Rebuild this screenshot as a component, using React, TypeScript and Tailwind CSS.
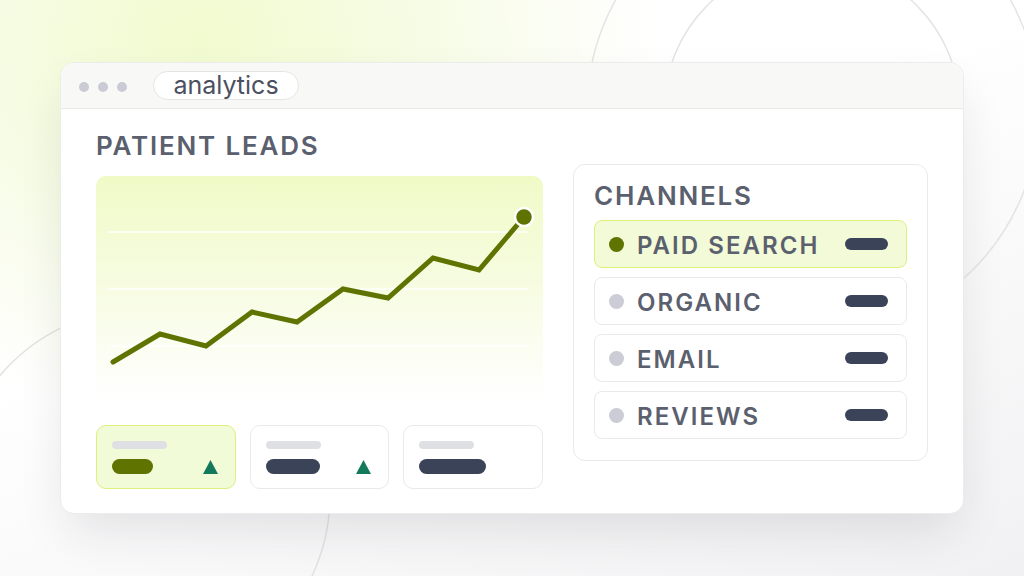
import React from "react";

const points: [number, number][] = [
  [17, 186],
  [64, 158],
  [110, 170],
  [156, 136],
  [201, 146],
  [247, 113],
  [292, 122],
  [337, 82],
  [383, 94],
  [428, 41],
];

const stats = [
  { active: true, bar: 41, up: true },
  { active: false, bar: 54, up: true },
  { active: false, bar: 67, up: false },
];

const channels = [
  { name: "PAID SEARCH", active: true },
  { name: "ORGANIC", active: false },
  { name: "EMAIL", active: false },
  { name: "REVIEWS", active: false },
];

function Backdrop() {
  return (
    <svg className="absolute inset-0" width="1024" height="576" viewBox="0 0 1024 576" fill="none">
      <circle cx="812" cy="110" r="148" stroke="#e4e4e2" strokeWidth="1.5" />
      <circle cx="813" cy="110" r="226" stroke="#e4e4e2" strokeWidth="1.5" />
      <circle cx="143" cy="496" r="187" stroke="#e2e2e0" strokeWidth="1.5" />
    </svg>
  );
}

function LeadsChart() {
  const d = points.map(([x, y], i) => `${i ? "L" : "M"}${x} ${y}`).join(" ");
  const [ex, ey] = points[points.length - 1];
  return (
    <div className="h-[224px] w-full rounded-[10px] bg-gradient-to-b from-[#f0fac6] via-[#f7fce2] to-white">
      <svg width="447" height="224" viewBox="0 0 447 224" fill="none">
        {[56, 113, 170].map((y) => (
          <line key={y} x1="12" x2="432" y1={y} y2={y} stroke="#ffffff" strokeWidth="1.5" strokeOpacity="0.9" />
        ))}
        <path d={d} stroke="#5e7300" strokeWidth="5" strokeLinejoin="miter" strokeLinecap="round" />
        <circle cx={ex} cy={ey} r="9" fill="#5e7300" stroke="#ffffff" strokeWidth="2.5" />
      </svg>
    </div>
  );
}

function StatCard({ active, bar, up }: { active: boolean; bar: number; up: boolean }) {
  return (
    <div
      className={`flex h-[64px] flex-col gap-[10px] rounded-[10px] border px-[15px] pt-[15px] ${
        active ? "border-[#dcf07c] bg-[#f2fbd8]" : "border-[#e9e9e7] bg-white"
      }`}
    >
      <div className="h-[8px] w-[55px] rounded-full bg-[#dfe0e4]" />
      <div className="flex items-center justify-between pr-[2px]">
        <div
          className={`h-[15px] rounded-full ${active ? "bg-[#5e7300]" : "bg-[#3b4358]"}`}
          style={{ width: bar }}
        />
        {up && (
          <svg width="15" height="14" viewBox="0 0 15 14">
            <path d="M7.5 0L15 14H0Z" fill="#14795a" />
          </svg>
        )}
      </div>
    </div>
  );
}

function ChannelRow({ name, active }: { name: string; active: boolean }) {
  return (
    <div
      className={`flex h-[48px] items-center rounded-[8px] border pl-[14px] pr-[18px] ${
        active ? "border-[#dcf07c] bg-[#f2fad8]" : "border-[#e9e9e7] bg-white"
      }`}
    >
      <div className={`size-[15px] rounded-full ${active ? "bg-[#5e7300]" : "bg-[#cbccd5]"}`} />
      <span className="ml-[13px] pt-[3px] text-[24px] leading-none font-semibold tracking-[0.085em] text-[#5b606e]">
        {name}
      </span>
      <div className="ml-auto h-[12px] w-[43px] rounded-full bg-[#3b4358]" />
    </div>
  );
}

export default function App() {
  return (
    <div
      className="relative h-[576px] w-[1024px] overflow-hidden bg-[radial-gradient(ellipse_460px_380px_at_200px_40px,#f1fbcf_0%,#f7fce6_50%,rgba(255,255,255,0)_100%),linear-gradient(160deg,#ffffff_40%,#f1f1f3_100%)]"
      style={{ fontFamily: "Inter, 'Noto Sans', sans-serif" }}
    >
      <Backdrop />
      <div className="relative pl-[60px] pt-[62px]">
        <div className="h-[452px] w-[904px] overflow-hidden rounded-[14px] border border-[#ececea] bg-white shadow-[0_22px_50px_-8px_rgba(30,30,45,0.12)]">
          <div className="flex h-[46px] items-center border-b border-[#e9e9e7] bg-[#f8f8f6] pl-[18px]">
            <div className="flex gap-[9px] pt-[2px]">
              <span className="size-[10px] rounded-full bg-[#cacbd4]" />
              <span className="size-[10px] rounded-full bg-[#cacbd4]" />
              <span className="size-[10px] rounded-full bg-[#cacbd4]" />
            </div>
            <div className="ml-[26px] flex h-[29px] w-[146px] items-center justify-center rounded-full border border-[#e4e4e2] bg-white text-[25px] leading-none text-[#4b5060]">
              <span>analytics</span>
            </div>
          </div>
          <div className="flex gap-[30px] pl-[35px] pr-[35px] pt-[22px]">
            <div className="flex w-[447px] flex-col">
              <h1 className="text-[26px] leading-[30px] font-semibold tracking-[0.07em] text-[#5b606e]">
                PATIENT LEADS
              </h1>
              <div className="mt-[15px]">
                <LeadsChart />
              </div>
              <div className="mt-[25px] grid grid-cols-3 gap-[14px]">
                {stats.map((s, i) => (
                  <StatCard key={i} {...s} />
                ))}
              </div>
            </div>
            <div className="mt-[33px] flex h-[297px] w-[356px] flex-col rounded-[12px] border border-[#e9e9e5] bg-white px-[20px] pt-[16px]">
              <h2 className="text-[26px] leading-[30px] font-semibold tracking-[0.07em] text-[#5b606e]">
                CHANNELS
              </h2>
              <div className="mt-[9px] flex flex-col gap-[9px]">
                {channels.map((c) => (
                  <ChannelRow key={c.name} {...c} />
                ))}
              </div>
            </div>
          </div>
        </div>
      </div>
    </div>
  );
}
